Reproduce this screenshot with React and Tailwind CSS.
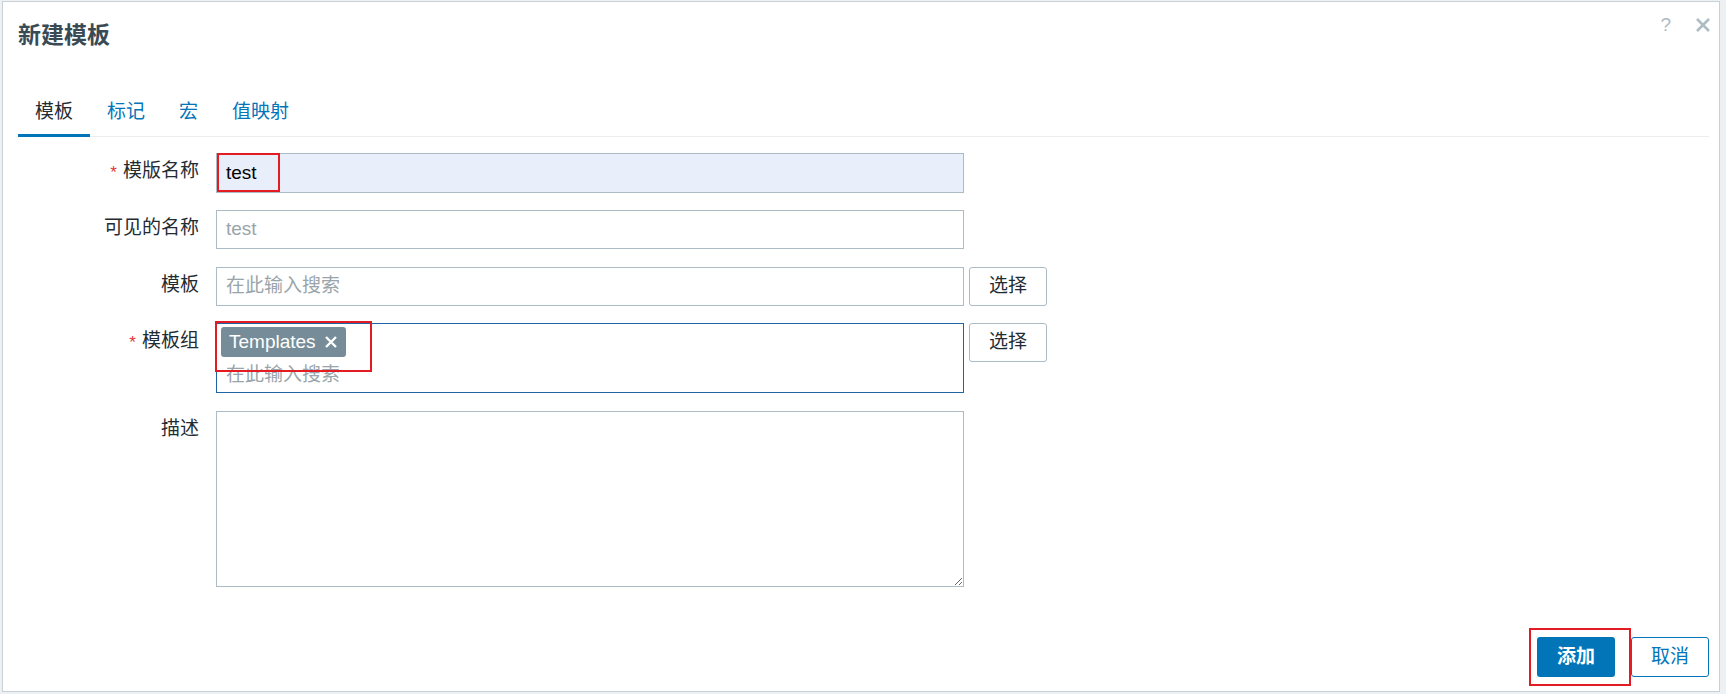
import React from 'react'

const font = { fontFamily: '"Liberation Sans", "Noto Sans CJK SC", sans-serif' }

function Label({ children, required }) {
  return (
    <div className="flex h-[37px] w-[181px] shrink-0 items-center justify-end text-[19px] text-[#1f2c33]">
      {required && <span className="mr-[6px] mt-[2px] text-[17px] text-[#e33734]">*</span>}
      {children}
    </div>
  )
}

function SelectButton() {
  return (
    <button className="ml-[5px] h-[39px] w-[78px] shrink-0 rounded-[3px] border border-[#acbbc4] bg-white text-[19px] text-[#1f2c33]">
      选择
    </button>
  )
}

export default function App() {
  const tabs = ['模板', '标记', '宏', '值映射']

  return (
    <div className="h-[694px] w-[1726px] bg-[#eef1f3] pt-[1px] pl-[2px]" style={font}>
      <div className="relative flex h-[691px] w-[1718px] flex-col border border-[#c8d1d6] bg-white pl-[15px] pr-[10px]">
        {/* header */}
        <div className="flex h-[66px] items-center">
          <h1 className="text-[23px] font-bold text-[#3a4a55]">新建模板</h1>
        </div>
        <div className="absolute right-[8px] top-[13px] flex items-center gap-[24px] text-[#acbbc4]">
          <span className="text-[19px] leading-none">?</span>
          <svg width="16" height="16" viewBox="0 0 16 16">
            <path d="M2 2L14 14M14 2L2 14" stroke="#acbbc4" strokeWidth="2.6" />
          </svg>
        </div>

        {/* tabs */}
        <div className="mt-[20px] flex border-b border-[#ebeef0]">
          {tabs.map((t, i) => (
            <div
              key={t}
              className={`-mb-px flex h-[49px] items-center px-[17px] text-[19px] ${
                i === 0 ? 'border-b-[3px] border-[#0275b8] pt-[3px] text-[#1f2c33]' : 'text-[#0275b8]'
              }`}
            >
              {t}
            </div>
          ))}
        </div>

        {/* form */}
        <div className="flex flex-col pt-[16px]">
          <div className="flex">
            <Label required>模版名称</Label>
            <div className="ml-[17px] flex h-[40px] w-[748px] items-center border border-[#acbbc4] bg-[#e8eefa] px-[9px] text-[19px] text-[#000]">
              test
            </div>
          </div>

          <div className="mt-[17px] flex">
            <Label>可见的名称</Label>
            <div className="ml-[17px] flex h-[39px] w-[748px] items-center border border-[#acbbc4] bg-white px-[9px] text-[19px] text-[#9aa5ab]">
              test
            </div>
          </div>

          <div className="mt-[18px] flex">
            <Label>模板</Label>
            <div className="ml-[17px] flex h-[39px] w-[748px] items-center border border-[#acbbc4] bg-white px-[9px] text-[19px] text-[#9aa5ab]">
              在此输入搜索
            </div>
            <SelectButton />
          </div>

          <div className="mt-[17px] flex">
            <Label required>模板组</Label>
            <div className="ml-[17px] flex h-[70px] w-[748px] flex-col border border-[#1f65a6] bg-white px-[4px] pt-[3px]">
              <div className="flex">
                <span className="flex h-[30px] items-center gap-[9px] rounded-[3px] bg-[#768d99] pl-[8px] pr-[9px] text-[19px] text-white">
                  Templates
                  <svg width="12" height="12" viewBox="0 0 12 12">
                    <path d="M1 1L11 11M11 1L1 11" stroke="#fff" strokeWidth="2.4" />
                  </svg>
                </span>
              </div>
              <div className="mt-[6px] pl-[5px] text-[19px] leading-[24px] text-[#9aa5ab]">在此输入搜索</div>
            </div>
            <SelectButton />
          </div>

          <div className="mt-[18px] flex">
            <Label>描述</Label>
            <textarea className="ml-[17px] h-[176px] w-[748px] resize border border-[#acbbc4] bg-white px-[9px] py-[6px] text-[19px] outline-none" />
          </div>
        </div>

        {/* footer */}
        <div className="mt-auto flex justify-end gap-[16px] pb-[14px]">
          <button className="h-[40px] w-[78px] rounded-[3px] bg-[#0275b8] text-[19px] font-semibold text-white">添加</button>
          <button className="h-[40px] w-[78px] rounded-[3px] border border-[#0275b8] bg-white text-[19px] text-[#0275b8]">
            取消
          </button>
        </div>

        {/* annotation boxes */}
        <div className="pointer-events-none absolute left-[214px] top-[151px] h-[39px] w-[63px] border-2 border-[#e31b23]" />
        <div className="pointer-events-none absolute left-[212px] top-[319px] h-[51px] w-[157px] border-2 border-[#e31b23]" />
        <div className="pointer-events-none absolute left-[1526px] top-[626px] h-[58px] w-[102px] border-2 border-[#e31b23]" />
      </div>
    </div>
  )
}
